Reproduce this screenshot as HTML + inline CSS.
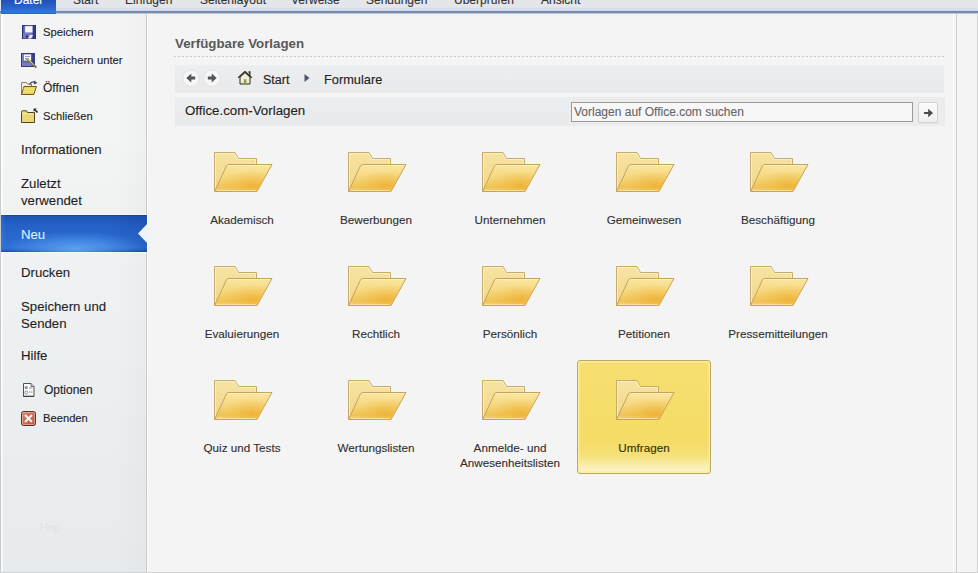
<!DOCTYPE html>
<html><head><meta charset="utf-8">
<style>
*{margin:0;padding:0;box-sizing:border-box}
html,body{width:978px;height:573px;overflow:hidden;background:#f4f4f4;font-family:"Liberation Sans",sans-serif;color:#222}
.si,.ss,.lbl,.bt,.tab,#search span{-webkit-text-stroke:0.12px currentColor}
.abs{position:absolute}
#tabs{position:absolute;left:0;top:0;width:978px;height:14px;background:linear-gradient(#e4e6e9 0,#e3e6ea 7px,#d9e0ee 8px,#d0d9ee 11px,#7585a6 11.5px,#7d8cab 12.5px,#b8c6da 13.5px,#eaf4fa 14px)}
.tab{position:absolute;top:-7px;font-size:12px;color:#333;white-space:nowrap}
#datei{position:absolute;left:1px;top:0;width:55px;height:14px;background:linear-gradient(#2150b6,#2a67cc 60%,#3079d8 85%,#2a63c2)}
#side{position:absolute;left:0;top:14px;width:146px;height:558px;background:linear-gradient(90deg,rgba(255,255,255,.6) 0,rgba(255,255,255,.6) 2px,rgba(0,0,0,0) 2px,rgba(0,0,0,0) 115px,rgba(0,0,0,.02) 146px),linear-gradient(#f4f4f5 0,#f3f4f4 120px,#f0f2f2 200px,#eef1f2 290px,#eaedef 440px,#e8ebee 558px);border-left:1px solid #c8cccf}
#sideb{position:absolute;left:146px;top:14px;width:1px;height:559px;background:#c9c9c9}
#sidew{position:absolute;left:147px;top:14px;width:1px;height:559px;background:#fdfdfd}
.si{position:absolute;font-size:13.2px;color:#1e1e1e;white-space:nowrap;line-height:17px}
.ss{position:absolute;font-size:11.2px;color:#1e1e1e;white-space:nowrap;line-height:14px}
#neu{position:absolute;left:1px;top:215px;width:146px;height:37px;box-shadow:0 -1px 0 #f8fbfe,0 1px 0 #f8fbfe;background:radial-gradient(ellipse 72px 17px at 74px 34px,rgba(92,164,242,.95),rgba(92,164,242,0) 100%),linear-gradient(90deg,rgba(80,140,230,.3) 0,rgba(0,0,0,0) 5px,rgba(0,0,0,0) 105px,rgba(10,40,110,.15) 146px),linear-gradient(#163e8c 0,#1e55b6 1.5px,#2460c6 25%,#2a6ad0 65%,#2c6ed4 88%,#2462c4 95%,#173f8e 100%)}
#rline1{position:absolute;left:953px;top:14px;width:1px;height:559px;background:#fbfbfb}
#rline2{position:absolute;left:956px;top:14px;width:1px;height:559px;background:#cdcdcd}
#rline3{position:absolute;left:977px;top:14px;width:1px;height:559px;background:#d4d4d4}
#bline{position:absolute;left:0;top:572px;width:978px;height:1px;background:#d2d2d2}
h1{position:absolute;left:175px;top:36px;font-size:13.3px;font-weight:bold;color:#595959;white-space:nowrap;line-height:15px}
#dots{position:absolute;left:174px;top:56px;width:771px;height:1px;background:repeating-linear-gradient(90deg,#cbcbcb 0,#cbcbcb 2px,transparent 2px,transparent 4px)}
#bc{position:absolute;left:175px;top:65px;width:769px;height:28px;background:linear-gradient(#eceef0,#e7e9eb)}
#ob{position:absolute;left:175px;top:97px;width:770px;height:29px;background:linear-gradient(#eceff1,#e7e9eb)}
#obr{position:absolute;left:568px;top:97px;width:377px;height:29px;background:#ececec}
.bt{position:absolute;font-size:12.5px;color:#222;white-space:nowrap;line-height:15px}
#search{position:absolute;left:571px;top:102px;width:342px;height:20px;background:#f7f7f7;border:1px solid #9a9a9a}
#search span{position:absolute;left:2px;top:2px;font-size:12px;color:#666;line-height:14px;white-space:nowrap}
#go{position:absolute;left:918px;top:102px;width:20px;height:21px;background:linear-gradient(#fbfbfb,#efefef);border:1px solid #d2d2d2;border-radius:2px;box-shadow:0 1px 0 rgba(0,0,0,.04)}
.cell{position:absolute;width:134px;height:114px}
.cell svg{position:absolute;left:39px;top:20px}
.lbl{position:absolute;left:0;width:134px;top:80px;text-align:center;font-size:11.7px;color:#303030;line-height:15px}
#hl{position:absolute;left:577px;top:360px;width:134px;height:114px;border:1px solid #b9a866;border-radius:3px;background:linear-gradient(#f6df70 0,#f5dc66 70%,#f6e078 84%,#f9eeb0 94%,#fbf6d2 100%);box-shadow:inset 0 0 0 1px #fbee9c,inset 0 0 0 2px rgba(250,236,140,.5)}
</style></head><body>
<div id="tabs"></div>
<div id="datei"></div>
<div class="tab" style="left:14px;top:-7.5px;font-size:12px;color:#fff">Datei</div>
<div class="tab" style="left:73px">Start</div>
<div class="tab" style="left:125px">Einfügen</div>
<div class="tab" style="left:200px">Seitenlayout</div>
<div class="tab" style="left:291px">Verweise</div>
<div class="tab" style="left:366px">Sendungen</div>
<div class="tab" style="left:454px">Überprüfen</div>
<div class="tab" style="left:541px">Ansicht</div>

<div id="side"></div>
<div id="sideb"></div><div id="sidew"></div>
<div id="rline1"></div><div id="rline2"></div><div id="rline3"></div>
<div id="bline"></div>

<!-- sidebar -->
<svg class="abs" style="left:22px;top:25px" width="14" height="14" viewBox="0 0 14 14"><rect x="0.5" y="0.5" width="13" height="13" fill="#5a5ea8" stroke="#2c3076"/><rect x="10.5" y="1" width="3" height="12" fill="#34388a"/><rect x="3" y="1" width="7.5" height="6.5" fill="#f4f4fa" stroke="#b0b2cc" stroke-width=".5"/><rect x="1" y="8" width="9.5" height="5.5" fill="#7478c0"/><path d="M6 13.5 L8 10 L11 10 L9 13.5Z" fill="#e8eaf8"/><rect x="4" y="10.5" width="2" height="2" fill="#1c2060"/></svg>
<div class="ss" style="left:43px;top:25px">Speichern</div>
<svg class="abs" style="left:21px;top:53px" width="17" height="15" viewBox="0 0 17 15"><rect x="0.5" y="0.5" width="13" height="13" fill="#7a7cc0" stroke="#34387e"/><rect x="10.5" y="1" width="3" height="12" fill="#3c4088"/><rect x="3" y="1.5" width="7" height="6" fill="#f6f6fa"/><path d="M4 3.5 H9 M4 5.5 H8" stroke="#8a8ca8" stroke-width=".8"/><path d="M2 9 H10" stroke="#4a4e96"/><path d="M5.5 5.5 L13 12.5" stroke="#7d8a40" stroke-width="2.2"/><path d="M6 5.2 L13 11.8" stroke="#e8f0a0" stroke-width=".7"/><path d="M12.5 12 L15.5 14.5" stroke="#8a6c6c" stroke-width="2.2"/></svg>
<div class="ss" style="left:43px;top:53px;word-spacing:0.5px">Speichern unter</div>
<svg class="abs" style="left:21px;top:80px" width="17" height="15" viewBox="0 0 17 15"><path d="M0.5 14.5 L0.5 2.5 L5.5 2.5 L6.5 4 L10.5 4 L10.5 14.5Z" fill="#f2eedc" stroke="#8a8470"/><path d="M0.5 14.5 L3 6.5 L15.5 6.5 L12.8 14.5Z" fill="#ead45c" stroke="#6e5a22"/><path d="M2.5 9 L13.5 9 M2 11.5 L13 11.5" stroke="#f6e684" stroke-width="1"/><path d="M8.5 4.5 Q10.5 1 14 2.2" stroke="#3e4860" stroke-width="1.4" fill="none"/><path d="M13 0.5 L16.5 3 L12.8 4.6Z" fill="#3e4860"/></svg>
<div class="ss" style="left:43px;top:81px;font-size:12px">Öffnen</div>
<svg class="abs" style="left:21px;top:108px" width="17" height="15" viewBox="0 0 17 15"><path d="M0.5 4.5 L0.5 3.5 Q0.5 2.8 1.5 2.8 L5.5 2.8 L6.5 4.5 L13.5 4.5 L13.5 14.5 L0.5 14.5Z" fill="#e9d779" stroke="#4e4422"/><path d="M1.5 6 L12.5 6" stroke="#f6eab0"/><path d="M12.5 0.5 L15.8 0.5 L12.5 3.8Z" fill="#2a2a2a"/><path d="M13.5 1.5 L16.5 4.5" stroke="#2a2a2a" stroke-width="1.6"/></svg>
<div class="ss" style="left:43px;top:109px">Schließen</div>

<div class="si" style="left:21px;top:141px">Informationen</div>
<div class="si" style="left:21px;top:175px">Zuletzt<br>verwendet</div>
<div id="neu"></div>
<svg class="abs" style="left:137px;top:224px" width="11" height="20" viewBox="0 0 11 20"><path d="M10 0 L1 9.5 L10 19 L11 19 L11 0Z" fill="#eef3f8"/></svg>
<div class="si" style="left:21px;top:226px;color:#dcf0ff">Neu</div>
<div class="si" style="left:21px;top:264px">Drucken</div>
<div class="si" style="left:21px;top:298px">Speichern und<br>Senden</div>
<div class="si" style="left:21px;top:347px">Hilfe</div>
<svg class="abs" style="left:23px;top:383px" width="12" height="14" viewBox="0 0 12 14"><path d="M0.5 0.5 L8 0.5 L11 3.5 L11 13.5 L0.5 13.5Z" fill="#f8f9fb" stroke="#4c5058"/><path d="M8 0.5 L8 3.5 L11 3.5" fill="#d8dce4" stroke="#4c5058" stroke-width=".8"/><circle cx="3.2" cy="4.5" r="1.6" fill="#8a8e96"/><path d="M6 5 H9.5 M6 9 H9.5" stroke="#9a9ea6"/><circle cx="3.2" cy="9.5" r="1.5" fill="none" stroke="#8a8e96" stroke-width=".9"/><path d="M0.5 13.2 H11" stroke="#3a3e46" stroke-width="1"/></svg>
<div class="ss" style="left:44px;top:383px;font-size:12px">Optionen</div>
<svg class="abs" style="left:21px;top:411px" width="15" height="15" viewBox="0 0 15 15"><defs><linearGradient id="gx" x1="0" y1="0" x2="1" y2="1"><stop offset="0" stop-color="#d48a72"/><stop offset="1" stop-color="#b4543c"/></linearGradient></defs><rect x="0.5" y="0.5" width="14" height="14" rx="2" fill="url(#gx)" stroke="#5e3026"/><rect x="1.5" y="1.5" width="12" height="12" rx="1" fill="none" stroke="#e6aa96" stroke-width=".8"/><path d="M4 4 L11 11 M11 4 L4 11" stroke="#fff4f0" stroke-width="2"/></svg>
<div class="ss" style="left:43px;top:411px">Beenden</div>

<!-- main -->
<h1>Verfügbare Vorlagen</h1>
<div id="dots"></div>
<div id="bc"></div>
<svg class="abs" style="left:182px;top:69px" width="40" height="19" viewBox="0 0 40 19"><circle cx="9" cy="9.2" r="8.2" fill="#f7f7f7" stroke="#dedede" stroke-width=".8"/><path d="M4.3 9 L9.3 4.6 L9.3 7.6 L13.2 7.6 L13.2 10.6 L9.3 10.6 L9.3 13.4Z" fill="#555"/><circle cx="30" cy="9.2" r="8.2" fill="#f7f7f7" stroke="#dedede" stroke-width=".8"/><path d="M34.7 9 L29.7 4.6 L29.7 7.6 L25.8 7.6 L25.8 10.6 L29.7 10.6 L29.7 13.4Z" fill="#555"/></svg>
<svg class="abs" style="left:237px;top:70px" width="16" height="15" viewBox="0 0 16 15"><path d="M3 7.2 L3 14 L13 14 L13 7.2 L8 2.6Z" fill="#efefd6" stroke="#2e2a1e" stroke-width="1"/><rect x="6.8" y="9.2" width="2.6" height="4.8" fill="#8e9c58"/><path d="M11.5 2 L12.8 2 L12.8 5.6" stroke="#2e2a1e" stroke-width="1.3" fill="none"/><path d="M1.2 7.8 L8 1.6 L14.8 7.8" stroke="#2e2a1e" stroke-width="1.3" fill="none" stroke-linejoin="round"/></svg>
<div class="bt" style="left:263px;top:73px">Start</div>
<svg class="abs" style="left:304px;top:74px" width="6" height="8" viewBox="0 0 6 8"><path d="M0.5 0 L5.5 4 L0.5 8Z" fill="#4e5676"/></svg>
<div class="bt" style="left:324px;top:72px;font-size:12.8px">Formulare</div>
<div id="ob"></div>
<div id="obr"></div>
<div class="bt" style="left:185px;top:103px;font-size:13.3px">Office.com-Vorlagen</div>
<div id="search"><span>Vorlagen auf Office.com suchen</span></div>
<div id="go"><svg class="abs" style="left:4px;top:5px" width="11" height="10" viewBox="0 0 11 10"><path d="M1 3.9 L5.2 3.9 L5.2 0.8 L10 5 L5.2 9.2 L5.2 6.1 L1 6.1Z" fill="#4a4a4a"/></svg></div>

<div id="hl"></div>
<svg width="0" height="0" style="position:absolute">
<defs>
<linearGradient id="gb" x1="0" y1="0" x2="0" y2="1"><stop offset="0" stop-color="#f6e4a2"/><stop offset="1" stop-color="#f0d68a"/></linearGradient>
<linearGradient id="gf" x1="0" y1="0" x2="0" y2="1"><stop offset="0" stop-color="#fae7a2"/><stop offset="0.5" stop-color="#f5d67c"/><stop offset="0.85" stop-color="#f0c455"/><stop offset="1" stop-color="#f3d490"/></linearGradient>
<radialGradient id="gor" cx="0.66" cy="0.78" r="0.55"><stop offset="0" stop-color="#eeaf30" stop-opacity=".8"/><stop offset="0.6" stop-color="#f0b840" stop-opacity=".35"/><stop offset="1" stop-color="#f0b840" stop-opacity="0"/></radialGradient>
<symbol id="folder" viewBox="0 0 59 41">
<path d="M0.5 39.5 L0.5 0.5 L21 0.5 L24.5 6.5 L42.5 6.5 L42.5 39.5Z" fill="url(#gb)" stroke="#c6ab6c"/>
<path d="M1.5 38 L1.5 1.5 L20.5 1.5 L24 7.5 L41.5 7.5 L41.5 12" fill="none" stroke="#fbefc6" stroke-opacity=".9"/>
<path d="M0.5 39.5 L12.5 13.8 Q13.2 12.5 14.8 12.5 L58 12.5 L43 39.5Z" fill="url(#gf)" stroke="#c7a25c"/>
<path d="M0.5 39.5 L12.5 13.8 Q13.2 12.5 14.8 12.5 L58 12.5 L43 39.5Z" fill="url(#gor)"/>
<path d="M15 13.5 L56.3 13.5" stroke="#fdf1c8" stroke-opacity=".8"/>
<path d="M2.5 38.5 L41.8 38.5" stroke="#f7e2a6" stroke-opacity=".9"/>
</symbol>
</defs></svg>

<div class="cell" style="left:175px;top:132px"><svg width="59" height="41"><use href="#folder"/></svg><div class="lbl">Akademisch</div></div>
<div class="cell" style="left:309px;top:132px"><svg width="59" height="41"><use href="#folder"/></svg><div class="lbl">Bewerbungen</div></div>
<div class="cell" style="left:443px;top:132px"><svg width="59" height="41"><use href="#folder"/></svg><div class="lbl">Unternehmen</div></div>
<div class="cell" style="left:577px;top:132px"><svg width="59" height="41"><use href="#folder"/></svg><div class="lbl">Gemeinwesen</div></div>
<div class="cell" style="left:711px;top:132px"><svg width="59" height="41"><use href="#folder"/></svg><div class="lbl">Beschäftigung</div></div>

<div class="cell" style="left:175px;top:246px"><svg width="59" height="41"><use href="#folder"/></svg><div class="lbl">Evaluierungen</div></div>
<div class="cell" style="left:309px;top:246px"><svg width="59" height="41"><use href="#folder"/></svg><div class="lbl">Rechtlich</div></div>
<div class="cell" style="left:443px;top:246px"><svg width="59" height="41"><use href="#folder"/></svg><div class="lbl">Persönlich</div></div>
<div class="cell" style="left:577px;top:246px"><svg width="59" height="41"><use href="#folder"/></svg><div class="lbl">Petitionen</div></div>
<div class="cell" style="left:711px;top:246px"><svg width="59" height="41"><use href="#folder"/></svg><div class="lbl">Pressemitteilungen</div></div>

<div class="cell" style="left:175px;top:360px"><svg width="59" height="41"><use href="#folder"/></svg><div class="lbl">Quiz und Tests</div></div>
<div class="cell" style="left:309px;top:360px"><svg width="59" height="41"><use href="#folder"/></svg><div class="lbl">Wertungslisten</div></div>
<div class="cell" style="left:443px;top:360px"><svg width="59" height="41"><use href="#folder"/></svg><div class="lbl">Anmelde- und<br>Anwesenheitslisten</div></div>
<div class="cell" style="left:577px;top:360px"><svg width="59" height="41"><use href="#folder"/></svg><div class="lbl" style="color:#33300f">Umfragen</div></div>
<div class="abs" style="left:40px;top:520px;font-size:11px;color:#dfe2e5;line-height:14px">Hng</div>
</body></html>
